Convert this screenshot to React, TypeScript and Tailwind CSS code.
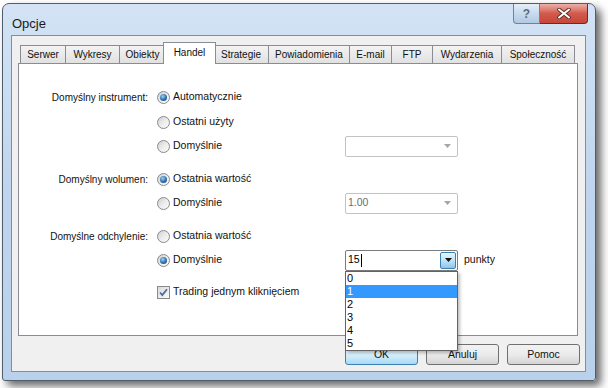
import type { ReactNode } from 'react'
import { clsx } from 'clsx'

const TABS: { label: string; w: string; active?: boolean }[] = [
  { label: 'Serwer', w: 'w-[46px]' },
  { label: 'Wykresy', w: 'w-[55px]' },
  { label: 'Obiekty', w: 'w-[47px]' },
  { label: 'Handel', w: 'w-[53px]', active: true },
  { label: 'Strategie', w: 'w-[56px]' },
  { label: 'Powiadomienia', w: 'w-[82px]' },
  { label: 'E-mail', w: 'w-[43px]' },
  { label: 'FTP', w: 'w-[42px]' },
  { label: 'Wydarzenia', w: 'w-[70px]' },
  { label: 'Społeczność', w: 'w-[74px]' },
]

function Radio({ checked }: { checked?: boolean }) {
  return (
    <span className="flex h-[13px] w-[13px] shrink-0 items-center justify-center rounded-full border border-[#8a8a8a] bg-gradient-to-br from-[#cfcfcf] via-[#ececec] to-[#fbfbfb]">
      {checked && (
        <span className="h-[7px] w-[7px] rounded-full bg-[radial-gradient(circle_at_40%_35%,#9fd3f5,#2a6dad_55%,#17487a)]" />
      )}
    </span>
  )
}

function Option({ checked, children }: { checked?: boolean; children: ReactNode }) {
  return (
    <div className="flex items-center gap-[3px] text-[10.5px] text-[#111]">
      <Radio checked={checked} />
      <span>{children}</span>
    </div>
  )
}

function Row({ label, mt, children, right }: { label?: string; mt: string; children: ReactNode; right?: ReactNode }) {
  return (
    <div className={clsx('flex h-[24px] items-center', mt)}>
      <div className="w-[129px] text-right text-[10px] text-[#111]">{label}</div>
      <div className="ml-[9px] flex w-[188px] items-center">{children}</div>
      {right}
    </div>
  )
}

function Arrow({ color }: { color: string }) {
  return (
    <svg width="7" height="4" viewBox="0 0 7 4">
      <path d="M0 0h7L3.5 4z" fill={color} />
    </svg>
  )
}

function DisabledCombo({ value }: { value?: string }) {
  return (
    <div className="flex h-[21px] w-[113px] items-center rounded-[2px] border border-[#c3c3c3] bg-white pl-[2px] pr-[6px] text-[10.5px] text-[#6d6d6d]">
      <span className="flex-1">{value}</span>
      <Arrow color="#a6a6a6" />
    </div>
  )
}

function ActiveCombo() {
  const items = ['0', '1', '2', '3', '4', '5']
  return (
    <div className="relative flex items-center">
      <div className="flex h-[21px] w-[113px] items-center rounded-[2px] border border-[#7b7b7b] bg-white pl-[2px] text-[10.5px] text-black">
        <span>15</span>
        <span className="ml-px h-[13px] w-px bg-black" />
        <span className="ml-auto mr-px flex h-[17px] w-[16px] items-center justify-center rounded-[2px] border border-[#3c7fb1] bg-gradient-to-b from-[#e6f4fc] via-[#bee3f8] to-[#8ec5ea]">
          <Arrow color="#111" />
        </span>
      </div>
      <span className="ml-[6px] text-[10.5px] text-[#111]">punkty</span>
      <div className="absolute left-0 top-[21px] z-20 w-[113px] border border-[#646464] bg-white text-[11px] leading-[13px] text-black shadow-[2px_2px_3px_rgba(0,0,0,0.25)]">
        {items.map((n) => (
          <div key={n} className={clsx('h-[13px] pl-[1px]', n === '1' && 'bg-[#3399ff] text-white')}>
            {n}
          </div>
        ))}
      </div>
    </div>
  )
}

function Checkbox() {
  return (
    <span className="flex h-[13px] w-[13px] shrink-0 items-center justify-center border border-[#8a8a8a] bg-gradient-to-br from-[#dadada] to-[#fafafa]">
      <svg width="9" height="9" viewBox="0 0 9 9">
        <path d="M1 4.5l2.3 2.6L8 1.2" fill="none" stroke="#4a6a9c" strokeWidth="1.7" />
      </svg>
    </span>
  )
}

function Button({ children, primary }: { children: ReactNode; primary?: boolean }) {
  return (
    <button
      className={clsx(
        'flex h-[21px] w-[73px] items-center justify-center rounded-[3px] border text-[10.5px] text-[#111]',
        primary
          ? 'border-[#3c7fb1] bg-gradient-to-b from-[#eaf6fd] via-[#d9f0fc] to-[#a7d9f5]'
          : 'border-[#707070] bg-gradient-to-b from-[#f2f2f2] via-[#ebebeb] to-[#d4d4d4]',
      )}
    >
      {children}
    </button>
  )
}

export default function App() {
  return (
    <div className="h-[388px] w-[608px] overflow-hidden bg-white pl-[2px] pt-[3px] font-['Liberation_Sans',Arial,sans-serif]">
      <div className="flex h-[378px] w-[594px] flex-col rounded-t-[7px] rounded-b-[3px] border border-[#4f5d6e] bg-gradient-to-b from-[#d3e3f5] via-[#bfd5ed] to-[#b9d1ea] shadow-[5px_5px_8px_rgba(0,0,0,0.6)]">
        {/* title bar */}
        <div className="flex h-[31px] items-start">
          <span className="ml-[9px] mt-[10px] text-[13px] text-[#1a1a1a]">Opcje</span>
          <div className="ml-auto mr-[7px] flex">
            <span className="flex h-[20px] w-[27px] items-center justify-center rounded-bl-[4px] border border-t-0 border-[#6f8298] bg-gradient-to-b from-[#e4eef8] via-[#c8daee] to-[#b2c9e3] text-[12px] font-bold text-[#5d6b7c]">
              ?
            </span>
            <span className="flex h-[20px] w-[48px] items-center justify-center rounded-br-[4px] border border-l-0 border-t-0 border-[#6b2b24] bg-gradient-to-b from-[#eab0a8] via-[#d25a4c] to-[#c7463a]">
              <svg width="14" height="11" viewBox="0 0 14 11">
                <path d="M2 1.5l10 8M12 1.5l-10 8" stroke="#5a2a26" strokeWidth="3.6" strokeLinecap="round" />
                <path d="M2 1.5l10 8M12 1.5l-10 8" stroke="#fff" strokeWidth="2" strokeLinecap="round" />
              </svg>
            </span>
          </div>
        </div>

        {/* client area */}
        <div className="ml-[8px] h-[337px] w-[575px] border border-[#7f8fa3] bg-[#f0f0f0] pl-[6px] pt-[6px]">
          <div className="ml-[2px] flex h-[21px] items-end">
            {TABS.map((t, i) => (
              <div
                key={t.label}
                className={clsx(
                  'flex items-center justify-center border border-b-0 border-[#898c95] text-[10px] text-[#111]',
                  t.w,
                  i > 0 && !t.active && TABS[i - 1].active ? '-ml-[3px]' : i > 0 && !t.active ? '-ml-px' : '',
                  t.active
                    ? 'relative z-10 -mb-px -ml-[3px] h-[22px] bg-white pb-[3px]'
                    : 'h-[18px] bg-gradient-to-b from-[#f3f3f3] to-[#e1e1e1]',
                )}
              >
                {t.label}
              </div>
            ))}
          </div>

          <div className="relative h-[273px] w-[560px] border border-[#898c95] bg-white">
            <Row label="Domyślny instrument:" mt="mt-[21px]">
              <Option checked>Automatycznie</Option>
            </Row>
            <Row mt="mt-px">
              <Option>Ostatni użyty</Option>
            </Row>
            <Row mt="mt-0" right={<DisabledCombo />}>
              <Option>Domyślnie</Option>
            </Row>

            <Row label="Domyślny wolumen:" mt="mt-[9px]">
              <Option checked>Ostatnia wartość</Option>
            </Row>
            <Row mt="mt-0" right={<DisabledCombo value="1.00" />}>
              <Option>Domyślnie</Option>
            </Row>

            <Row label="Domyślne odchylenie:" mt="mt-[9px]">
              <Option>Ostatnia wartość</Option>
            </Row>
            <Row mt="mt-0" right={<ActiveCombo />}>
              <Option checked>Domyślnie</Option>
            </Row>

            <Row mt="mt-[8px]">
              <div className="flex items-center gap-[3px] text-[10.5px] text-[#111]">
                <Checkbox />
                <span>Trading jednym kliknięciem</span>
              </div>
            </Row>
          </div>

          <div className="mt-[8px] flex gap-[8px] pl-[327px]">
            <Button primary>OK</Button>
            <Button>Anuluj</Button>
            <Button>Pomoc</Button>
          </div>
        </div>
      </div>
    </div>
  )
}
